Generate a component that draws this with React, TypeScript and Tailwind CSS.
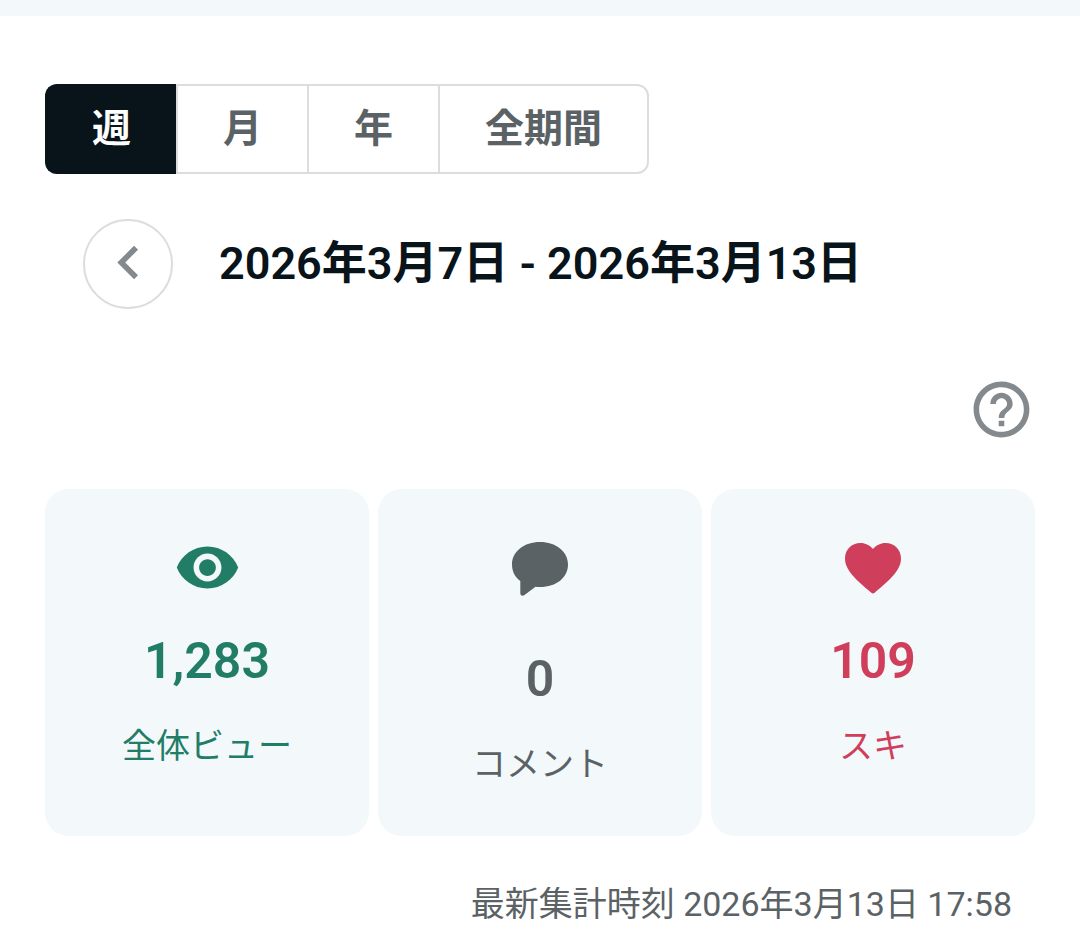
import { useState } from "react"
import { MdChevronLeft, MdHelpOutline, MdVisibility } from "react-icons/md"

interface StatProps {
    icon: React.ReactNode,
    value: string,
    label: string,
    className: string
}

const periods = ["週", "月", "年", "全期間"]

const CommentIcon = () => (
    <svg viewBox="0 0 56 54" className="w-14 h-[54px]" fill="currentColor" aria-hidden="true">
        <path d="M28 0C44 0 56 9.500 56 22.500C56 35.500 44.500 45 28 45C26.500 45 25 44.900 23.500 44.800L12.500 53C10.500 54.400 8.300 53.600 8.300 51.300V39C3 35.200 0 29.500 0 22.500C0 9.500 12 0 28 0Z" />
    </svg>
)

const HeartIcon = () => (
    <svg viewBox="0 0 56 51" className="w-14 h-[51px]" fill="currentColor" aria-hidden="true">
        <path d="M26.300 49.800C15 39.500 0 29 0 15.500C0 6.500 6.500 0 15.400 0C20.500 0 25 2.400 28 6.100C31 2.400 35.500 0 40.600 0C49.500 0 56 6.500 56 15.500C56 29 41 39.500 29.700 49.800C28.700 50.700 27.300 50.700 26.300 49.800Z" />
    </svg>
)

const Stat: React.FC<StatProps> = ({icon, value, label, className}) => {
    return (
        <div className={`flex flex-col items-center rounded-3xl bg-[#f3f8fb] pt-[45px] pb-[43px] ${className}`}>
            {icon}
            <span className="mt-5 text-[50px] leading-[80px] font-semibold">{value}</span>
            <span className="mt-4 text-[34px] leading-[58px]">{label}</span>
        </div>
    )
}

const App: React.FC = () => {

    const [period, setPeriod] = useState("週")

    return (
        <div className="min-h-screen bg-white font-[Roboto,'Noto_Sans_CJK_JP',sans-serif] text-[#5b6266]" lang="ja">
            <div className="h-4 bg-[#f3f8fb]" />

            <main className="px-[45px] pt-[68px] pb-3">
                <div className="flex">
                    {
                        periods.map((name) => (
                            <button
                            key={name}
                            type="button"
                            aria-pressed={period === name}
                            onClick={() => setPeriod(name)}
                            className={`h-[90px] border-y-2 border-l-2 px-[45px] text-[39px] font-semibold first:rounded-l-xl last:rounded-r-xl last:border-r-2 ${
                                period === name ? "border-[#08131a] bg-[#08131a] text-white" : "border-[#dddddd] bg-white"
                            }`}
                            >
                                {name}
                            </button>
                        ))
                    }
                </div>

                <div className="mt-[45px] flex items-center gap-[46px] pl-[38px]">
                    <button
                    type="button"
                    aria-label="前の週"
                    className="flex size-[90px] shrink-0 items-center justify-center rounded-full border-2 border-[#dddddd] pb-1 text-[#83898d]"
                    >
                        <MdChevronLeft className="size-[67px] shrink-0" />
                    </button>
                    <h1 className="text-[45px] leading-[68px] font-semibold text-[#08131a]">
                        2026年3月7日 - 2026年3月13日
                    </h1>
                </div>

                <div className="mt-[67px] flex justify-end">
                    <button type="button" aria-label="ヘルプ" className="text-[#83898d]">
                        <MdHelpOutline className="size-[67px]" />
                    </button>
                </div>

                <div className="mt-[46px] grid grid-cols-3 gap-[9px]">
                    <Stat
                    icon={<MdVisibility className="size-[67px]" />}
                    value="1,283"
                    label="全体ビュー"
                    className="text-[#227d66]"
                    />
                    <Stat
                    icon={<div className="flex h-[85px] pt-2"><CommentIcon /></div>}
                    value="0"
                    label="コメント"
                    className="text-[#5b6266]"
                    />
                    <Stat
                    icon={<div className="flex h-[67px] pt-[9px]"><HeartIcon /></div>}
                    value="109"
                    label="スキ"
                    className="text-[#cf3e5b]"
                    />
                </div>

                <p className="mt-10 pr-[23px] text-right text-[34px] leading-[56px]">
                    最新集計時刻 2026年3月13日 17:58
                </p>
            </main>
        </div>
    )
}

export default App
